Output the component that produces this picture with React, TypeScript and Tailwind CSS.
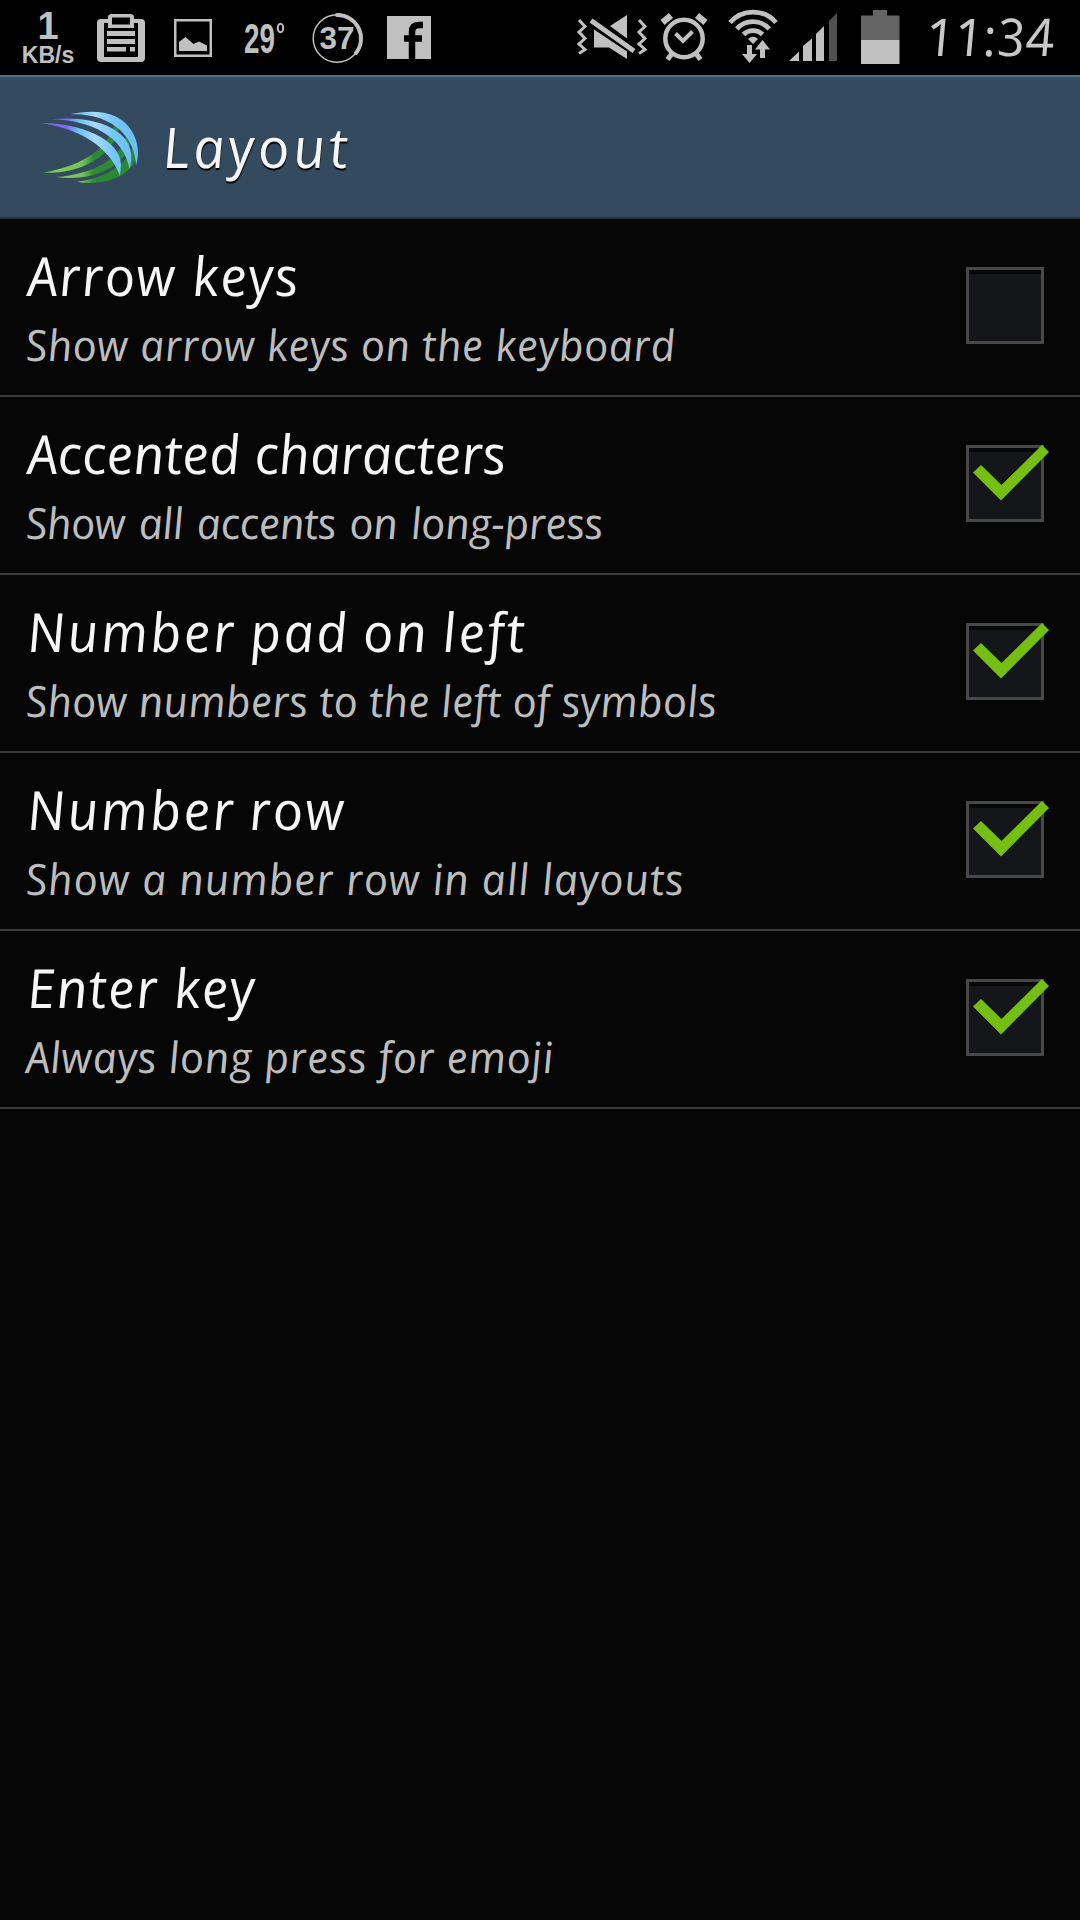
import { useState } from 'react';
import type { ReactNode } from 'react';

const OPTIONS = [
  {
    id: 'arrows',
    title: 'Arrow keys',
    summary: 'Show arrow keys on the keyboard',
    checked: false,
    titleSpacing: 'tracking-[1.5px]',
    summarySpacing: 'tracking-[0.4px]',
  },
  {
    id: 'accents',
    title: 'Accented characters',
    summary: 'Show all accents on long-press',
    checked: true,
    titleSpacing: 'tracking-[0px]',
    summarySpacing: 'tracking-[-0.4px] [word-spacing:2.5px]',
  },
  {
    id: 'numpad',
    title: 'Number pad on left',
    summary: 'Show numbers to the left of symbols',
    checked: true,
    titleSpacing: 'tracking-[2.3px] [word-spacing:-3px]',
    summarySpacing: 'tracking-[0.1px]',
  },
  {
    id: 'numrow',
    title: 'Number row',
    summary: 'Show a number row in all layouts',
    checked: true,
    titleSpacing: 'tracking-[2.2px] [word-spacing:-3px]',
    summarySpacing: 'tracking-[0.8px]',
  },
  {
    id: 'enter',
    title: 'Enter key',
    summary: 'Always long press for emoji',
    checked: true,
    titleSpacing: 'tracking-[1.3px]',
    summarySpacing: 'tracking-[0.5px]',
  },
];

// Each icon is drawn in status bar coordinates, x is its left edge
function StatusIcon({ x, width, className, children }: { x: number; width: number; className?: string; children: ReactNode }) {
  return (
    <svg
      width={width}
      height={75}
      viewBox={`${x} 0 ${width} 75`}
      fill="#c0c0c0"
      className={`shrink-0 overflow-visible ${className ?? ''}`}
    >
      {children}
    </svg>
  );
}

function StatusBar() {
  return (
    <header className="flex h-[75px] bg-black pl-[20px] text-[#c0c0c0] not-italic">
      <div className="flex w-[56px] shrink-0 flex-col items-center pt-[7px] font-['Liberation_Sans',sans-serif] font-bold">
        <span className="text-[38px] leading-[38px]">1</span>
        <span className="text-[23px] leading-[20px]">KB/s</span>
      </div>

      {/* Clipboard */}
      <StatusIcon x={97} width={48} className="ml-[21px]">
        <path
          fillRule="evenodd"
          d="M101 19H108V17Q108 14 112 14H130Q134 14 134 17V19H141Q145 19 145 23V58Q145 62 141 62H101Q97 62 97 58V23Q97 19 101 19ZM104 23V57H138V23H134V28H108V23ZM112 17.5V24.5H130V17.5Z"
        />
        <path d="M107 31H135V36H107ZM107 39H135V44H107ZM107 47H126V51.500H107ZM130 47H135V51.500H130Z" />
      </StatusIcon>

      {/* Picture */}
      <StatusIcon x={174} width={38} className="ml-[29px]">
        <path fillRule="evenodd" d="M174 19H212V57H174ZM176.500 21.500V54.500H209.500V21.500Z" />
        <path d="M179 51V42L185.500 37L193.500 44L199 41.500L207 45.500V51Z" />
      </StatusIcon>

      {/* Temperature */}
      <StatusIcon x={244} width={42} className="ml-[32px]">
        <text x="244" y="53" fontFamily="Liberation Sans, sans-serif" fontWeight="700" fontSize="43" textLength="31" lengthAdjust="spacingAndGlyphs">
          29
        </text>
        <ellipse cx="280.500" cy="28" rx="2.700" ry="4.200" fill="none" stroke="#c0c0c0" strokeWidth="2" />
      </StatusIcon>

      {/* Battery percent ring */}
      <StatusIcon x={312} width={51} className="ml-[26px]">
        <circle cx="337" cy="38.500" r="23.800" fill="none" stroke="#c0c0c0" strokeWidth="1.500" />
        <path d="M337 15A23.500 23.500 0 0 1 356 53" fill="none" stroke="#c0c0c0" strokeWidth="4" strokeLinecap="round" />
        <text x="319.500" y="49" fontFamily="Liberation Sans, sans-serif" fontWeight="700" fontSize="31" textLength="35" lengthAdjust="spacingAndGlyphs">
          37
        </text>
      </StatusIcon>

      {/* Facebook */}
      <StatusIcon x={387} width={44} className="ml-[24px]">
        <path d="M387 16H431V59H387Z" />
        <path d="M423 25H419Q412 25 412 32V59M404 38.500H422" fill="none" stroke="#000" strokeWidth="6.500" />
      </StatusIcon>

      {/* Sound off, vibrate */}
      <StatusIcon x={577} width={70} className="ml-[146px]">
        <path d="M579 20L585 26.500L579 32L585 38.500L579 44L585 49.500L579 53.500M639 20L645 26.500L639 32L645 38.500L639 44L645 49.500L639 53.500" fill="none" stroke="#c0c0c0" strokeWidth="3" />
        <path d="M610 26L627 15V38.500ZM594 29.500L627 51.500V59L609 47.500H594Z" />
        <path d="M591 20.500L634 51" stroke="#c0c0c0" strokeWidth="5" />
      </StatusIcon>

      {/* Alarm */}
      <StatusIcon x={660} width={48} className="ml-[13px]">
        <circle cx="684" cy="38.500" r="18.700" fill="none" stroke="#c0c0c0" strokeWidth="4.500" />
        <path d="M675.500 33.500L683 41L692.500 31.500" fill="none" stroke="#c0c0c0" strokeWidth="4" />
        <path d="M662.500 22.500L671 15.500M705.500 22.500L697 15.500" stroke="#c0c0c0" strokeWidth="6.500" />
        <path d="M672 53.500L667.500 59.500M696 53.500L700.500 59.500" stroke="#c0c0c0" strokeWidth="5" />
      </StatusIcon>

      {/* Wifi with traffic arrows */}
      <StatusIcon x={728} width={50} className="ml-[20px]">
        <g fill="none" stroke="#c0c0c0" strokeWidth="4.800">
          <path d="M730 22.500A30.500 30.500 0 0 1 776 22.500" />
          <path d="M736.800 28.800A22 22 0 0 1 769.200 28.800" />
          <path d="M743.500 34.500A13.500 13.500 0 0 1 762.500 34.500" />
        </g>
        <path d="M748 39Q753 34.500 758 39L753 44Z" />
        <path d="M747 45H752V54H757L749.500 63L742 54H747ZM760 58V49.500H755L762.500 40L770 49.500H765V58Z" />
      </StatusIcon>

      {/* Mobile signal */}
      <StatusIcon x={789} width={48} className="ml-[11px]">
        <path d="M789 61L799 51.500V61ZM803 61V46L812 38.500V61ZM816 61V34L824 26V61Z" />
        <path d="M829 61V21L837 13V61Z" fill="#505050" />
      </StatusIcon>

      {/* Battery */}
      <StatusIcon x={860} width={40} className="ml-[23px]">
        <path d="M861 40V15.500H873V10H887V15.500H899.500V40Z" fill="#656565" />
        <path d="M861 40H899.500V64H861Z" />
      </StatusIcon>

      <span className="ml-[25px] skew-x-[7deg] whitespace-nowrap text-[52px] leading-[71px] tracking-[0.2px] text-[#c8c8c8] italic">
        11:34
      </span>
    </header>
  );
}

function SwiftLogo() {
  return (
    <svg width={120} height={85} viewBox="0 0 360 255" className="shrink-0">
      <defs>
        <linearGradient id="sky" gradientUnits="userSpaceOnUse" x1="36" y1="0" x2="325" y2="0">
          <stop offset="0" stopColor="#7a5cf0" />
          <stop offset="0.26" stopColor="#7d6cf2" />
          <stop offset="0.38" stopColor="#6cc2f4" />
          <stop offset="0.55" stopColor="#a6daf6" />
          <stop offset="0.75" stopColor="#73c6f6" />
          <stop offset="1" stopColor="#68bdf2" />
        </linearGradient>
        <linearGradient id="leaf" gradientUnits="userSpaceOnUse" x1="38" y1="0" x2="320" y2="0">
          <stop offset="0" stopColor="#2f8a35" />
          <stop offset="0.12" stopColor="#7ccb5a" />
          <stop offset="0.42" stopColor="#76c455" />
          <stop offset="0.54" stopColor="#2f8a35" />
          <stop offset="1" stopColor="#2a8732" />
        </linearGradient>
      </defs>
      <g fill="url(#leaf)">
        <path d="M38 203C130 188 235 145 255 52L268 58C264 140 160 212 38 203Z" />
        <path d="M80 216C180 208 282 165 292 74L304 98C300 180 190 232 80 216Z" />
        <path d="M140 230C220 222 300 180 314 105L322 145C312 215 220 245 140 230Z" />
      </g>
      <g fill="url(#sky)">
        <path d="M118 28C200 10 272 22 305 78C326 112 328 148 318 182C316 100 250 22 118 28Z" />
        <path d="M64 43C170 30 312 62 304 165L299 192C280 92 180 46 64 43Z" />
        <path d="M34 54C140 52 274 100 273 180L270 213C236 120 145 72 34 54Z" />
      </g>
    </svg>
  );
}

function Checkbox({ checked }: { checked: boolean }) {
  return (
    <span className="relative block h-[77px] w-[78px] shrink-0 border-[3px] border-[#484848] bg-[#15161a]">
      <span className="block h-[4px] bg-[#070707]" />
      {checked && (
        <svg width={90} height={77} viewBox="0 0 90 77" className="absolute -left-[3px] -top-[3px]">
          <path d="M7 27.500L15 20L35.500 40L76 0L83 7L35 55.500Z" fill="#74bf12" />
        </svg>
      )}
    </span>
  );
}

export default function App() {
  const [options, setOptions] = useState(OPTIONS);

  const toggle = (id: string) =>
    setOptions((prev) => prev.map((o) => (o.id === id ? { ...o, checked: !o.checked } : o)));

  return (
    <div className="min-h-[1920px] w-[1080px] overflow-hidden bg-[#060606] font-['Open_Sans',sans-serif] italic">
      <StatusBar />

      <div className="flex h-[144px] items-center border-t-2 border-b-2 border-t-[#4f708c] border-b-[#26333f] bg-[#344a5f] pl-[30px]">
        <SwiftLogo />
        <h1 className="ml-[16px] mt-[-2px] origin-bottom-left skew-x-[7deg] text-[56px] leading-[70px] tracking-[3.7px] text-[#f5f5f5] [text-shadow:0_2px_1px_#000]">
          Layout
        </h1>
      </div>

      <ul>
        {options.map((option) => (
          <li key={option.id} className="h-[178px] border-b-2 border-[#3c3c3c]">
            <button
              onClick={() => toggle(option.id)}
              className="flex h-full w-full items-start justify-between pl-[27px] pr-[36px] text-left italic"
            >
              <div className="pt-[23px] whitespace-nowrap">
                <p className={`ml-[2px] origin-[0_54px] skew-x-[7deg] text-[54px] leading-[66px] text-[#f5f5f5] ${option.titleSpacing}`}>
                  {option.title}
                </p>
                <p className={`mt-[12px] origin-[0_42px] skew-x-[7deg] text-[43px] leading-[50px] text-[#bdbdbd] ${option.summarySpacing}`}>
                  {option.summary}
                </p>
              </div>
              <div className="pt-[48px]">
                <Checkbox checked={option.checked} />
              </div>
            </button>
          </li>
        ))}
      </ul>
    </div>
  );
}
